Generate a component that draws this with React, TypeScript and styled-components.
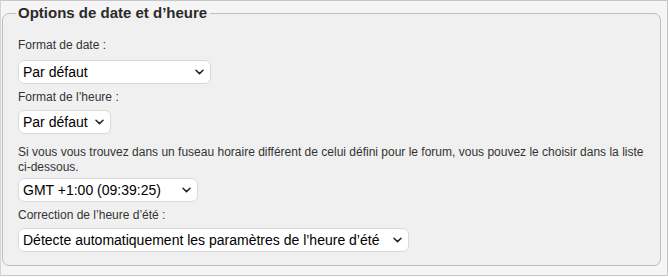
import styled, { createGlobalStyle } from "styled-components";

const GlobalStyle = createGlobalStyle`
  html, body {
    margin: 0;
    padding: 0;
    background: #ffffff;
  }
`;

function Chevron() {
  return (
    <svg width="9" height="6" viewBox="0 0 9 6" aria-hidden="true">
      <path d="M1 1.2 L4.5 4.6 L8 1.2" fill="none" stroke="#222" strokeWidth="1.5" strokeLinecap="round" strokeLinejoin="round" />
    </svg>
  );
}

function Dropdown({ value, width }: { value: string; width: number }) {
  return (
    <SelectBox style={{ width }}>
      <SelectValue>{value}</SelectValue>
      <Chevron />
    </SelectBox>
  );
}

export default function App() {
  return (
    <>
      <GlobalStyle />
      <Panel>
        <Fieldset>
          <Legend>Options de date et d’heure</Legend>

          <Label $first>Format de date :</Label>
          <Dropdown value="Par défaut" width={193} />

          <Label>Format de l’heure :</Label>
          <Dropdown value="Par défaut" width={93} />

          <Hint>
            Si vous vous trouvez dans un fuseau horaire différent de celui défini pour le forum, vous pouvez le
            choisir dans la liste ci-dessous.
          </Hint>
          <Dropdown value="GMT +1:00 (09:39:25)" width={180} />

          <Label>Correction de l’heure d’été :</Label>
          <Dropdown value="Détecte automatiquement les paramètres de l’heure d’été" width={391} />
        </Fieldset>
      </Panel>
    </>
  );
}

const Panel = styled.div`
  box-sizing: border-box;
  width: 668px;
  height: 276px;
  border: 1px solid #c6c6c6;
  border-left-color: #d4d4d4;
  background: #f5f5f5;
  padding: 3px 6px 0 1px;
`;

const Fieldset = styled.fieldset`
  box-sizing: border-box;
  margin: 0;
  height: 262px;
  border: 1px solid #bdbdbd;
  border-radius: 7px;
  background: #f0f0f0;
  padding: 0 14px 0 15px;
  font-family: "Liberation Sans", Arial, sans-serif;
  color: #333333;
`;

const Legend = styled.legend`
  padding: 0 3px 0 2px;
  margin-left: -2px;
  font-weight: bold;
  font-size: 15px;
  line-height: 18px;
  color: #2a2a2a;
`;

const Label = styled.div<{ $first?: boolean }>`
  font-size: 12px;
  line-height: 15px;
  margin: ${({ $first }) => ($first ? "16px 0 7px" : "6px 0 5px")};
`;

const Hint = styled.p`
  font-size: 12px;
  line-height: 15px;
  margin: 11px 0 3px;
`;

const SelectBox = styled.div`
  box-sizing: border-box;
  display: flex;
  align-items: center;
  justify-content: space-between;
  gap: 6px;
  height: 24px;
  padding: 0 6px 0 4px;
  background: #ffffff;
  border: 1px solid #d9d9d9;
  border-radius: 6px;
`;

const SelectValue = styled.span`
  font-size: 14px;
  color: #000000;
  white-space: nowrap;
`;
